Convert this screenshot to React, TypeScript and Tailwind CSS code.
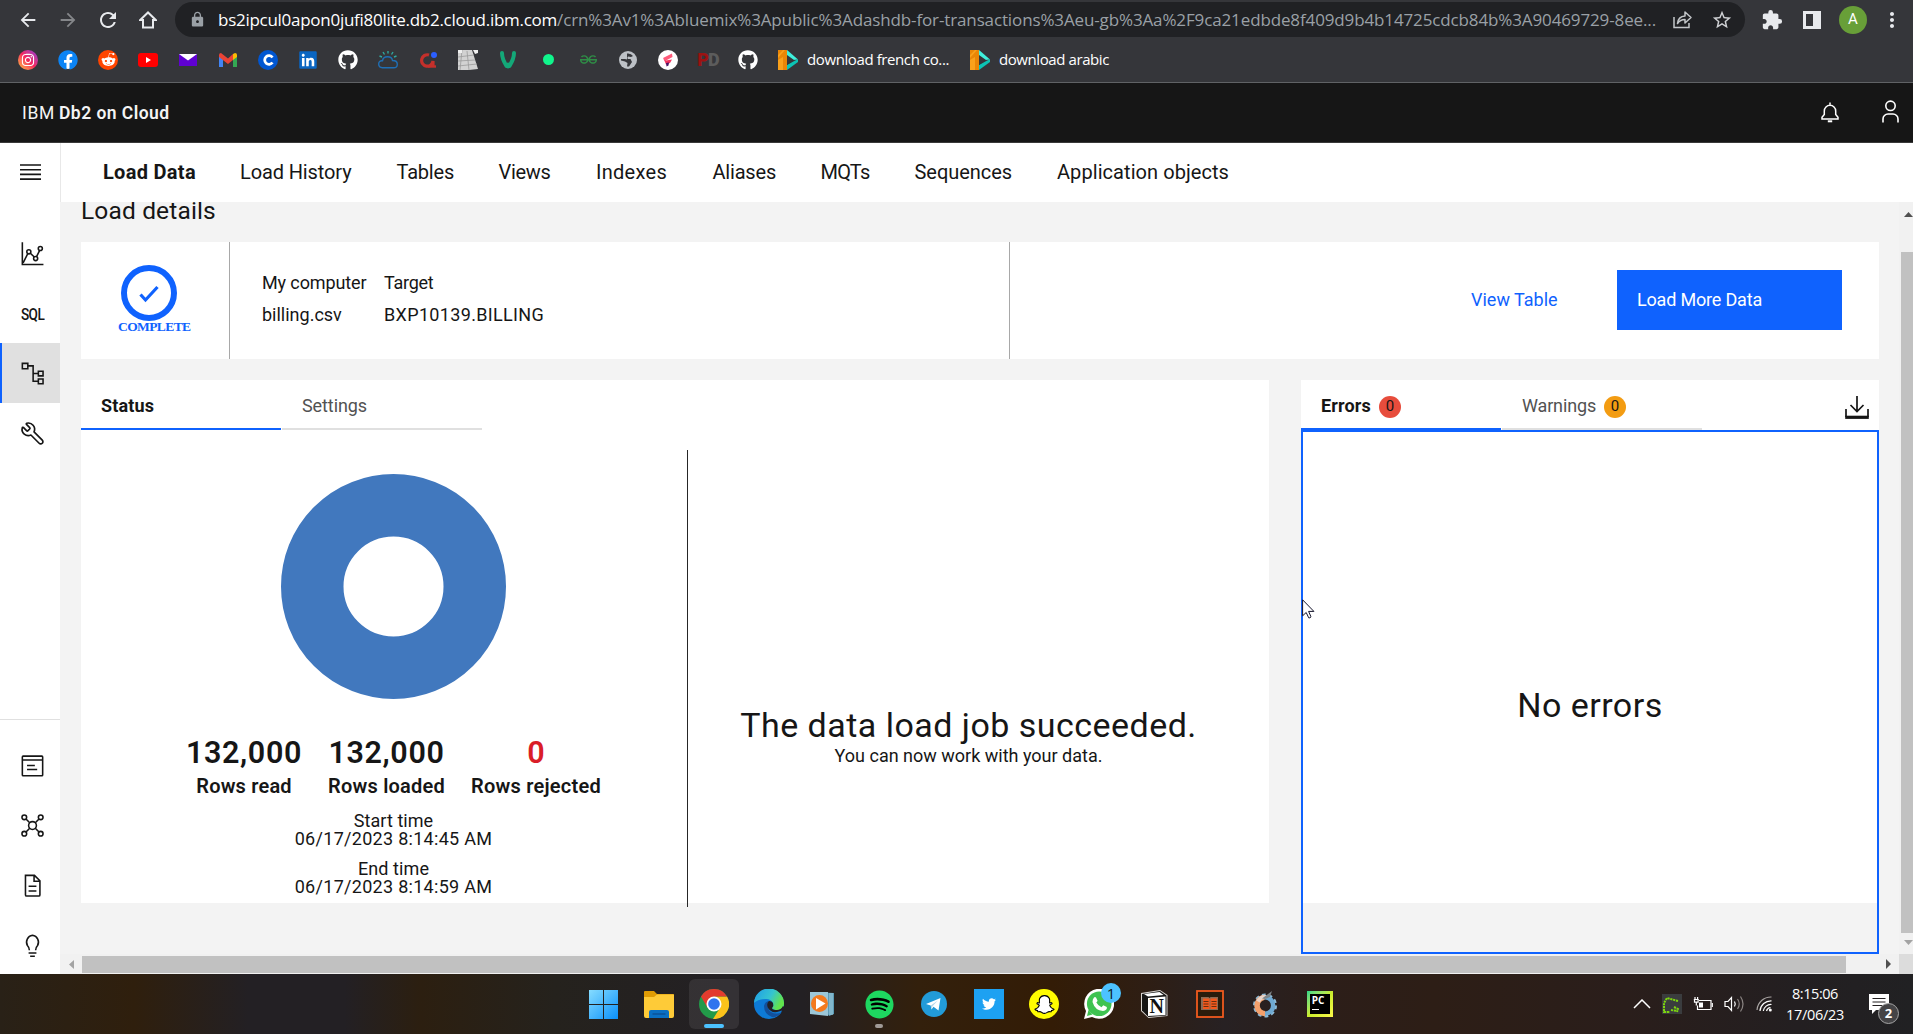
import React from "react";
import {
  FaInstagram,
  FaFacebook,
  FaRedditAlien,
  FaGithub,
  FaLinkedin,
  FaSnapchatGhost,
  FaSpotify,
  FaTwitter,
} from "react-icons/fa";
import {
  MdArrowBack,
  MdArrowForward,
  MdRefresh,
  MdLock,
  MdStarBorder,
  MdExtension,
  MdMoreVert,
} from "react-icons/md";
import { SiGeeksforgeeks } from "react-icons/si";
import { Wrench } from "lucide-react";

/* ---------- Browser chrome ---------- */

function ToolbarCell({ children }: { children: React.ReactNode }) {
  return <div className="flex w-10 shrink-0 items-center justify-center">{children}</div>;
}

function Toolbar() {
  return (
    <div className="flex h-[39px] items-center pl-2 text-[#e8eaed]">
      <ToolbarCell>
        <MdArrowBack size={22} />
      </ToolbarCell>
      <ToolbarCell>
        <MdArrowForward size={22} className="text-[#85878a]" />
      </ToolbarCell>
      <ToolbarCell>
        <MdRefresh size={24} />
      </ToolbarCell>
      <ToolbarCell>
        <svg width="18" height="18" viewBox="0 0 18 18" fill="none" stroke="#e8eaed" strokeWidth="2">
          <path d="M1.200 9L9 1.500 16.800 9H14v7.500H4V9z" />
        </svg>
      </ToolbarCell>
      <div className="ml-[7px] flex h-[35px] w-[1570px] items-center rounded-full bg-[#202124] pl-[14px]">
        <MdLock size={17} className="shrink-0 text-[#9aa0a6]" />
        <div className="ml-[12px] w-[1441px] font-['Open_Sans',sans-serif] text-[17px] leading-6 whitespace-nowrap">
          <span className="tracking-[-0.273px] text-white">bs2ipcul0apon0jufi80lite.db2.cloud.ibm.com</span>
          <span className="tracking-[-0.128px] text-[#9aa0a6]">
            /crn%3Av1%3Abluemix%3Apublic%3Adashdb-for-transactions%3Aeu-gb%3Aa%2F9ca21edbde8f409d9b4b14725cdcb84b%3A90469729-8ee...
          </span>
        </div>
        <svg width="21" height="21" viewBox="0 0 21 21" fill="none" stroke="#c4c7ca" strokeWidth="1.5" className="ml-[13px] shrink-0">
          <path d="M2 8v10.5h15V14" />
          <path d="M5.5 14.5c.4-4.5 3-7.200 7.500-7.500V3l6 5.500-6 5.500v-3.600c-3.400 0-5.600 1.200-7.500 4.100z" strokeLinejoin="round" />
        </svg>
        <MdStarBorder size={22} className="ml-[18px] shrink-0 text-[#d0d2d5]" />
      </div>
      <MdExtension size={22} className="ml-[16px]" />
      <div className="ml-[20px] h-[18px] w-[18px] border-[3px] border-r-[8px] border-[#e8eaed]" />
      <div className="ml-[18px] flex h-7 w-7 items-center justify-center rounded-full bg-[#689f38] font-['Roboto',sans-serif] text-[15px] text-white">
        A
      </div>
      <MdMoreVert size={24} className="ml-[13px]" />
    </div>
  );
}

function PlayBookmark() {
  return (
    <svg width="20" height="20" viewBox="0 0 20 20">
      <path d="M0 0h9v20H0z" fill="#ea8606" />
      <path d="M0 5l5-5h2L0 8zM0 20V10l5-3v13z" fill="#f9a11b" />
      <path d="M9 0l11 9.500-5 .5-6-4z" fill="#3ff0dc" />
      <path d="M20 9v3L9 20v-5z" fill="#0cc4b4" />
      <path d="M9 5l7 5-7 5z" fill="#35363a" />
    </svg>
  );
}

function Bookmarks() {
  return (
    <div className="flex h-[41px] items-center pl-2 text-white">
      <ToolbarCell>
        <div className="flex h-5 w-5 items-center justify-center rounded-full bg-linear-to-tr from-[#fdb82c] via-[#f5205e] to-[#9020d8]">
          <FaInstagram size={14} />
        </div>
      </ToolbarCell>
      <ToolbarCell>
        <div className="flex h-[18px] w-[18px] items-center justify-center rounded-full bg-white">
          <FaFacebook size={20} className="shrink-0 text-[#0b84f5]" />
        </div>
      </ToolbarCell>
      <ToolbarCell>
        <div className="flex h-5 w-5 items-center justify-center rounded-full bg-[#ff4500]">
          <FaRedditAlien size={15} />
        </div>
      </ToolbarCell>
      <ToolbarCell>
        <svg width="20" height="14" viewBox="0 0 20 14">
          <rect width="20" height="14" rx="3" fill="#f00" />
          <path d="M8 4l5 3-5 3z" fill="#fff" />
        </svg>
      </ToolbarCell>
      <ToolbarCell>
        <svg width="18" height="12" viewBox="0 0 18 12">
          <path d="M0 0h18v12H0z" fill="#5f01d1" />
          <path d="M0 0h18L9 6.500z" fill="#fff" />
        </svg>
      </ToolbarCell>
      <ToolbarCell>
        <svg width="18" height="14" viewBox="0 0 18 14">
          <path d="M0 2v12h4V5.500z" fill="#4285f4" />
          <path d="M18 2v12h-4V5.500z" fill="#34a853" />
          <path d="M14 1l2-1q2 0 2 2v2l-4 3z" fill="#fbbc04" />
          <path d="M0 4V2q0-2 2-2l7 5.500L14 1v6l-5 4z" fill="#ea4335" />
        </svg>
      </ToolbarCell>
      <ToolbarCell>
        <div className="flex h-5 w-5 items-center justify-center rounded-full bg-[#0056d2]">
          <svg width="12" height="12" viewBox="0 0 12 12" fill="none" stroke="#fff" strokeWidth="2.800">
            <path d="M10.500 3.500A4.300 4.300 0 1 0 10.500 8.500" />
          </svg>
        </div>
      </ToolbarCell>
      <ToolbarCell>
        <div className="flex h-[16px] w-[16px] items-center justify-center bg-white">
          <FaLinkedin size={20} className="shrink-0 text-[#0a66c2]" />
        </div>
      </ToolbarCell>
      <ToolbarCell>
        <FaGithub size={20} />
      </ToolbarCell>
      <ToolbarCell>
        <svg width="20" height="18" viewBox="0 0 20 18" fill="none" stroke="#1f6fb5" strokeWidth="1.400">
          <path d="M4.500 16.800Q.7 16.500.7 13T4.500 9.800Q5 5.800 9.500 5.800T14.500 9.500Q19.300 9.500 19.300 13.200T15.500 16.800z" />
          <path d="M10 0v2.500M5 1l1.500 2.500M15 1l-1.500 2.500M18.500 5l-2.500 1M1.500 5L4 6" stroke="#2fa8a0" />
        </svg>
      </ToolbarCell>
      <ToolbarCell>
        <svg width="17" height="18" viewBox="0 0 17 18" fill="none">
          <path d="M9 4A5.700 5.700 0 1 0 13 10v5.500" stroke="#c4302b" strokeWidth="3.200" />
          <path d="M8 15.500h8" stroke="#c4302b" strokeWidth="2.400" />
          <circle cx="14" cy="4" r="3" fill="#2b5fff" />
        </svg>
      </ToolbarCell>
      <ToolbarCell>
        <svg width="20" height="20" viewBox="0 0 20 20">
          <path d="M0 3h4V0h10l6 19-9 1H0z" fill="#d2d2d2" />
          <path d="M4 0L2 20M9 1l2 19M0 7l16-2M0 11l17-1M0 16l19-2" stroke="#9a9a9a" strokeWidth="0.800" />
          <path d="M0 0h4v3H0zM15 0h5v3l-3 1z" fill="#efefef" />
        </svg>
      </ToolbarCell>
      <ToolbarCell>
        <svg width="18" height="19" viewBox="0 0 18 19" fill="none" stroke="#14a878" strokeWidth="4" strokeLinecap="round">
          <path d="M3 3c0 5 2 9 4.500 13M15 3c0 5-2 9-4.500 13" />
          <path d="M9 14.500v2" />
        </svg>
      </ToolbarCell>
      <ToolbarCell>
        <div className="h-[11px] w-[11px] rounded-full bg-[#10f58c]" />
      </ToolbarCell>
      <ToolbarCell>
        <SiGeeksforgeeks size={17} className="text-[#2f8d46]" />
      </ToolbarCell>
      <ToolbarCell>
        <svg width="18" height="18" viewBox="0 0 18 18">
          <circle cx="9" cy="9" r="9" fill="#bdc1c6" />
          <path d="M8 2.500q4-.5 6 2.500l-2 1-3-.5q-1.500 1.500 0 2.500h2.500l1.500 3-3 4.500H8l.5-3.500L6 10.500 2 9.500V8h4l2 .5" fill="#35363a" />
        </svg>
      </ToolbarCell>
      <ToolbarCell>
        <svg width="20" height="20" viewBox="0 0 20 20">
          <circle cx="10" cy="10" r="10" fill="#fff" />
          <path d="M5 8l9-4.500.5 3.500L8 10.500z" fill="#ff5a7a" />
          <path d="M5 8l3 2.500 6-1L12 13l-4 1.500L7 12z" fill="#f2355f" />
          <path d="M8 13l3-.5-.5 3-2 1z" fill="#4a1466" />
        </svg>
      </ToolbarCell>
      <ToolbarCell>
        <span className="font-['Roboto',sans-serif] text-[18px] leading-5 font-black tracking-[-1px] text-[#9c1212]">
          P<span className="text-[#5c5c5c]">D</span>
        </span>
      </ToolbarCell>
      <ToolbarCell>
        <FaGithub size={20} />
      </ToolbarCell>
      <div className="ml-[10px] flex items-center font-['Open_Sans',sans-serif] text-[15px] leading-5 whitespace-nowrap">
        <PlayBookmark />
        <span className="mb-[2px] ml-[9px] w-[163px] tracking-[-0.398px]">download french co...</span>
        <PlayBookmark />
        <span className="mb-[2px] ml-[9px] tracking-[-0.414px]">download arabic</span>
      </div>
    </div>
  );
}

/* ---------- Application ---------- */

function AppHeader() {
  return (
    <header className="flex h-[60px] items-center border-b border-[#393939] bg-[#161616] pl-[22px] text-[17.5px] text-[#f4f4f4]">
      <span className="mt-[2px] w-[37px] tracking-[0.68px]">IBM</span>
      <span className="mt-[2px] font-semibold tracking-[0.45px]">Db2 on Cloud</span>
      <svg width="18" height="21" viewBox="0 0 18 21" fill="none" stroke="#fff" strokeWidth="1.500" className="mr-[43px] ml-auto">
        <path d="M9 .5v2M3.300 12.500V9a5.700 5.700 0 0 1 11.400 0v3.500l2.300 2.800v1.700H1v-1.700z" />
        <path d="M6.800 19.300h4.400" strokeWidth="2" />
      </svg>
      <svg width="17" height="23" viewBox="0 0 17 23" fill="none" stroke="#fff" strokeWidth="1.600" className="mr-[14px] mb-[2px]">
        <circle cx="8.500" cy="5.800" r="4.700" />
        <path d="M1 22.500V19a5 5 0 0 1 5-5h5a5 5 0 0 1 5 5v3.500" />
      </svg>
    </header>
  );
}

function CarbonIcon({ children }: { children: React.ReactNode }) {
  return (
    <svg width="25" height="25" viewBox="0 0 32 32" fill="none" stroke="#161616" strokeWidth="2" className="ml-[5px]">
      {children}
    </svg>
  );
}

function SideItem({ active, children }: { active?: boolean; children: React.ReactNode }) {
  return (
    <div
      className={
        active
          ? "flex h-[60px] w-[60px] shrink-0 items-center justify-center bg-[#e0e0e0] shadow-[inset_2px_0_0_#0f62fe]"
          : "flex h-[60px] w-[60px] shrink-0 items-center justify-center"
      }
    >
      {children}
    </div>
  );
}

function Sidebar() {
  return (
    <aside className="flex w-[60px] shrink-0 flex-col overflow-hidden bg-white">
      <div className="flex h-[58px] items-center pl-5">
        <svg width="21" height="16" viewBox="0 0 21 16" stroke="#161616" strokeWidth="1.600">
          <path d="M0 1h21M0 5.700h21M0 10.400h21M0 15.100h21" />
        </svg>
      </div>
      <div className="mt-[22px] flex flex-col">
        <SideItem>
          <CarbonIcon>
            <path d="M3 1.500V30h27M4 28l5.800-11.500M13.300 15.700l5 4.800M21.200 20l4-8" />
            <circle cx="11.300" cy="13.900" r="2.600" />
            <circle cx="20" cy="22.500" r="2.600" />
            <circle cx="26" cy="9.600" r="2.600" />
          </CarbonIcon>
        </SideItem>
        <SideItem>
          <span className="mt-[3px] ml-[5px] origin-center scale-x-80 text-[17px] font-medium tracking-[-0.7px] text-[#161616]">
            SQL
          </span>
        </SideItem>
        <SideItem active>
          <CarbonIcon>
            <path d="M3 3h7v7H3zM23.500 13h6v6h-6zM23.500 23h6v6h-6zM10 6.200h6.800V26h6.700M16.800 16h6.700" />
          </CarbonIcon>
        </SideItem>
        <SideItem>
          <Wrench size={25} strokeWidth={1.600} className="ml-[5px] -scale-x-100 text-[#161616]" />
        </SideItem>
      </div>
      <div className="mt-auto mb-[-1px] flex flex-col border-t border-[#e0e0e0] pt-[15px]">
        <SideItem>
          <CarbonIcon>
            <rect x="3" y="4" width="26" height="25" rx="1" />
            <path d="M3 9h26M9 16h10M9 21h13" />
          </CarbonIcon>
        </SideItem>
        <SideItem>
          <CarbonIcon>
            <circle cx="16" cy="16" r="5" />
            <circle cx="5.500" cy="5.500" r="3" />
            <circle cx="26.500" cy="5.500" r="3" />
            <circle cx="5.500" cy="26.500" r="3" />
            <circle cx="26.500" cy="26.500" r="3" />
            <path d="M7.700 7.700l4.700 4.700M24.300 7.700l-4.700 4.700M7.700 24.300l4.700-4.700M24.300 24.300l-4.700-4.700" />
          </CarbonIcon>
        </SideItem>
        <SideItem>
          <CarbonIcon>
            <path d="M7 3h11.500L25.500 10v18q0 1.500-1.500 1.500H8.500Q7 29.500 7 28zM18 3v7.500h7.500M11 17h10M11 23h10" />
          </CarbonIcon>
        </SideItem>
        <SideItem>
          <CarbonIcon>
            <path d="M12 22q0-3.500-2.500-6A8.800 8.800 0 0 1 16 3a8.800 8.800 0 0 1 6.500 13Q20 18.500 20 22M11 25.500h10M13 29.800h6" />
          </CarbonIcon>
        </SideItem>
      </div>
    </aside>
  );
}

function TopNav() {
  return (
    <nav className="relative z-10 flex h-[59px] shrink-0 items-center border-l border-[#e8e8e8] bg-white pb-[2px] pl-[42px] text-[20px] whitespace-nowrap text-[#161616]">
      <span className="w-[137px] font-bold tracking-[0.3px]">Load Data</span>
      <span className="w-[156.500px] tracking-[-0.12px]">Load History</span>
      <span className="w-[102px] tracking-[-0.2px]">Tables</span>
      <span className="w-[97.500px] tracking-[-0.3px]">Views</span>
      <span className="w-[116.500px] tracking-[0.28px]">Indexes</span>
      <span className="w-[108px] tracking-[-0.2px]">Aliases</span>
      <span className="w-[94px] tracking-[-0.73px]">MQTs</span>
      <span className="w-[142.500px] tracking-[-0.05px]">Sequences</span>
      <span className="tracking-[0.065px]">Application objects</span>
    </nav>
  );
}

function SummaryCard() {
  return (
    <section className="flex h-[117px] shrink-0 bg-white text-[18px]">
      <div className="flex w-[149px] flex-col border-r border-[#a8a8a8] pt-[23px] pl-[37px]">
        <svg width="56" height="56" viewBox="0 0 56 56" fill="none" stroke="#0f62fe" className="ml-[3px]">
          <circle cx="28" cy="28" r="25" strokeWidth="6" />
          <path d="M19.500 29.500l5 5.500L36.500 22" strokeWidth="3.200" />
        </svg>
        <span className="font-['Liberation_Serif',serif] text-[13.500px] leading-[12px] font-bold tracking-[-0.6px] text-[#0f62fe]">
          COMPLETE
        </span>
      </div>
      <div className="grid w-[780px] grid-cols-[122px_1fr] content-start border-r border-[#a8a8a8] pt-[25px] pl-8 leading-8 text-[#161616]">
        <span className="tracking-[-0.11px]">My computer</span>
        <span className="tracking-[-0.25px]">Target</span>
        <span>billing.csv</span>
        <span className="tracking-[0.34px]">BXP10139.BILLING</span>
      </div>
      <div className="flex flex-1 items-center justify-end pr-[37px] pb-[2px]">
        <a className="w-[146px] text-[#0f62fe]">View Table</a>
        <button className="h-[60px] w-[225px] bg-[#0f62fe] pl-5 text-left tracking-[-0.18px] text-white">
          Load More Data
        </button>
      </div>
    </section>
  );
}

function StatusCard() {
  return (
    <section className="flex h-[523px] w-[1188px] flex-col bg-white">
      <div className="flex h-[50px] shrink-0 gap-px text-[18px]">
        <div className="flex w-[200px] items-center border-b-2 border-[#0f62fe] pt-[3px] pl-5 font-bold tracking-[0.13px] text-[#161616]">
          Status
        </div>
        <div className="flex w-[200px] items-center border-b-2 border-[#e0e0e0] pt-[3px] pl-5 tracking-[-0.09px] text-[#525252]">
          Settings
        </div>
      </div>
      <div className="flex items-start">
        <div className="flex w-[606px] shrink-0 flex-col items-center pt-[44px] pl-[19px] text-[#161616]">
          <svg width="225" height="225" viewBox="0 0 225 225">
            <circle cx="112.500" cy="112.500" r="81.250" fill="none" stroke="#4178be" strokeWidth="62.500" />
          </svg>
          <div className="mt-[36px] flex gap-[26px] text-center text-[20px] leading-[30px] font-semibold">
            <div className="flex w-[116px] flex-col whitespace-nowrap">
              <span className="text-[30.500px] leading-9 tracking-[0.6px]">132,000</span>
              <span className="tracking-[0.19px]">Rows read</span>
            </div>
            <div className="flex w-[117px] flex-col whitespace-nowrap">
              <span className="text-[30.500px] leading-9 tracking-[0.6px]">132,000</span>
              <span className="tracking-[0.22px]">Rows loaded</span>
            </div>
            <div className="flex w-[130px] flex-col whitespace-nowrap">
              <span className="text-[30.500px] leading-9 text-[#da1e28]">0</span>
              <span className="tracking-[0.24px]">Rows rejected</span>
            </div>
          </div>
          <div className="mt-[11px] flex flex-col items-center text-[18px] leading-[18px]">
            <span className="tracking-[0.06px]">Start time</span>
            <span className="tracking-[0.29px]">06/17/2023 8:14:45 AM</span>
            <span className="mt-3 tracking-[0.08px]">End time</span>
            <span className="tracking-[0.29px]">06/17/2023 8:14:59 AM</span>
          </div>
        </div>
        <div className="mt-5 h-[457px] w-px shrink-0 bg-[#262626]" />
        <div className="flex flex-1 flex-col items-center pt-[274px] pr-[20px] text-[#161616]">
          <span className="text-[34px] leading-[42px] tracking-[0.47px]">The data load job succeeded.</span>
          <span className="text-[18px] leading-[20px]">You can now work with your data.</span>
        </div>
      </div>
    </section>
  );
}

function Pointer() {
  return (
    <svg width="13" height="20" viewBox="0 0 13 20" className="absolute top-[167px] -left-px">
      <path
        d="M.6.800v16L4.200 13.500l2.500 5.300q1.300.6 2.300-1L6.600 12.400h5.300z"
        fill="#fff"
        stroke="#14142a"
        strokeWidth="1"
      />
    </svg>
  );
}

function ErrorsCard() {
  return (
    <section className="flex h-[574px] w-[578px] flex-col">
      <div className="flex h-[50px] shrink-0 gap-px bg-white text-[18px]">
        <div className="flex w-[200px] items-center border-b-2 border-[#0f62fe] pt-[3px] pl-5 font-bold tracking-[0.16px] text-[#161616]">
          <span className="w-[58px]">Errors</span>
          <span className="mt-[2px] flex h-[22px] w-[22px] items-center justify-center rounded-full bg-[#e74c3c] text-[15px] font-normal">
            0
          </span>
        </div>
        <div className="flex w-[200px] items-center border-b-2 border-[#e0e0e0] pt-[3px] pl-5 tracking-[-0.15px] text-[#525252]">
          <span className="w-[82px]">Warnings</span>
          <span className="mt-[2px] flex h-[22px] w-[22px] items-center justify-center rounded-full bg-[#f39c12] text-[15px] text-[#161616]">
            0
          </span>
        </div>
        <svg width="24" height="24" viewBox="0 0 24 24" fill="none" stroke="#161616" className="mt-4 mr-[10px] ml-auto">
          <path d="M12 0v15M5.500 9l6.500 6.500L18.500 9M1 13v8M23 13v8" strokeWidth="1.700" />
          <path d="M.2 21.300h23.600" strokeWidth="3.200" />
        </svg>
      </div>
      <div className="relative flex-1 border-2 border-[#0f62fe]">
        <div className="h-[471px] bg-white pt-[252px] text-center text-[34px] leading-[42px] tracking-[0.45px] text-[#161616]">
          No errors
        </div>
        <Pointer />
      </div>
    </section>
  );
}

function Arrow({ d, color, w, h }: { d: string; color: string; w: number; h: number }) {
  return (
    <svg width={w} height={h} viewBox={`0 0 ${w} ${h}`} fill={color} className="shrink-0">
      <path d={d} />
    </svg>
  );
}

function Workspace() {
  return (
    <main className="flex min-w-0 flex-1 flex-col">
      <TopNav />
      <div className="flex h-[752px]">
        <div className="flex w-[1839px] flex-col bg-[#f3f3f3] pr-5 pl-[21px]">
          <h1 className="-mt-[6px] h-[46px] shrink-0 text-[24.500px] leading-[30px] tracking-[0.15px] text-[#161616]">
            Load details
          </h1>
          <SummaryCard />
          <div className="mt-[21px] flex justify-between">
            <StatusCard />
            <ErrorsCard />
          </div>
        </div>
        <div className="flex flex-1 flex-col items-end bg-[#f1f1f1]">
          <div className="flex h-[50px] items-start pt-[10px]">
            <Arrow w={9} h={5} d="M4.500 0L9 5H0z" color="#505050" />
          </div>
          <div className="h-[681px] w-3 bg-[#c1c1c1]" />
          <div className="pt-[7px]">
            <Arrow w={9} h={5} d="M0 0h9L4.500 5z" color="#a3a3a3" />
          </div>
        </div>
      </div>
      <div className="flex h-5 items-center bg-[#f1f1f1]">
        <div className="w-[22px] pl-[9px]">
          <Arrow w={5} h={9} d="M5 0v9L0 4.500z" color="#a3a3a3" />
        </div>
        <div className="mt-px h-[17px] w-[1764px] bg-[#c1c1c1]" />
        <div className="flex-1 pl-[40px]">
          <Arrow w={5} h={10} d="M0 0v10l5-5z" color="#505050" />
        </div>
        <div className="h-5 w-[14px] bg-[#dcdcdc]" />
      </div>
    </main>
  );
}

/* ---------- Taskbar ---------- */

function Task({ children, indicator }: { children: React.ReactNode; indicator?: React.ReactNode }) {
  return (
    <div className="relative flex h-[60px] w-[55.100px] shrink-0 items-center justify-center">
      {children}
      {indicator}
    </div>
  );
}

function Taskbar() {
  return (
    <footer className="flex h-[60px] w-full shrink-0 items-center bg-[linear-gradient(90deg,#292117_0%,#2f1f0d_7%,#232024_13%,#232024_18%,#2c1f10_22%,#25221d_29%,#232024_38%,#232023_42%,#33200c_48%,#331c06_55%,#2e1e14_60%,#272123_64%,#2c1e19_69%,#2d1e16_75%,#2a1e1b_85%,#231f21_94%,#212123_100%)] pl-[576px]">
      <Task>
        <svg width="29" height="29" viewBox="0 0 29 29">
          <defs>
            <linearGradient id="win" x1="0" y1="0" x2="1" y2="1">
              <stop offset="0" stopColor="#86dcff" />
              <stop offset="1" stopColor="#0a90fa" />
            </linearGradient>
          </defs>
          <path d="M0 0h14v14H0zM15 0h14v14H15zM0 15h14v14H0zM15 15h14v14H15z" fill="url(#win)" />
        </svg>
      </Task>
      <Task>
        <svg width="30" height="27" viewBox="0 0 30 27">
          <path d="M0 1q0-1 1-1h9l3 3h16q1 0 1 1v8H0z" fill="#e09c04" />
          <path d="M0 6h10l3-2.500h17V25q0 2-2 2H2q-2 0-2-2z" fill="#fecb38" />
          <path d="M5 27v-6q0-2 2-2h16q2 0 2 2v6z" fill="#0a6fc2" />
          <path d="M8.500 23h13" stroke="#0a4c8c" strokeWidth="1.200" />
        </svg>
      </Task>
      <Task indicator={<div className="absolute bottom-[6px] h-1 w-5 rounded-full bg-[#4cc2ff]" />}>
        <div className="flex h-[50px] w-[50px] shrink-0 items-center justify-center rounded-md bg-white/8">
          <svg width="30" height="30" viewBox="0 0 30 30">
            <circle cx="15" cy="15" r="15" fill="#229a49" />
            <path d="M28 7.500A15 15 0 0 1 14 30l7.500-12L15 7.500z" fill="#fcc21b" />
            <path d="M2 7.500A15 15 0 0 1 28 7.500H15L8.500 18.700z" fill="#e33b2e" />
            <circle cx="15" cy="15" r="7.500" fill="#fff" />
            <circle cx="15" cy="15" r="5.800" fill="#2f74ee" />
          </svg>
        </div>
      </Task>
      <Task>
        <svg width="30" height="30" viewBox="0 0 30 30">
          <defs>
            <linearGradient id="edge" x1="0" y1="0" x2="1" y2=".4">
              <stop offset="0" stopColor="#1e9be8" />
              <stop offset=".6" stopColor="#35c4d0" />
              <stop offset="1" stopColor="#62e44c" />
            </linearGradient>
          </defs>
          <circle cx="15" cy="15" r="15" fill="#0d7ad6" />
          <path d="M0 14A15 15 0 0 1 30 15q0 5-6 6-5 0-6-2 2-2 1-5-2-4-7-4-8 0-12 4z" fill="url(#edge)" />
          <path d="M10 17q0 8 8 11 5 1 10-5-6 3-11 0-3-2-3-6 0-3 2-5-5 0-6 5z" fill="#12509c" />
          <path d="M15 12q-3 3-1 7 3 5 9 4l5-1.500L27 24q3-1 3-6l-1-1q-2 4-6 4-5 0-5-2 2-2 1-5-1-2-4-2z" fill="#232023" />
        </svg>
      </Task>
      <Task>
        <svg width="26" height="26" viewBox="0 0 26 26" className="mr-1">
          <path d="M5 1l20 1v21l-5 2z" fill="#5c9bb5" />
          <path d="M23 2v22M21 2v22" stroke="#a6d3e4" strokeWidth="1" />
          <path d="M1 1h18v24L1 23z" fill="#9cc7d8" />
          <circle cx="10.500" cy="12.500" r="8.500" fill="#f37a1f" />
          <path d="M7 7l9.500 5.500L7 18.500z" fill="#fff" />
        </svg>
      </Task>
      <Task indicator={<div className="absolute bottom-[6px] h-1 w-2 rounded-full bg-[#a09a96]" />}>
        <div className="flex h-[26px] w-[26px] items-center justify-center rounded-full bg-black">
          <FaSpotify size={29} className="shrink-0 text-[#1ed760]" />
        </div>
      </Task>
      <Task>
        <svg width="26" height="26" viewBox="0 0 26 26">
          <circle cx="13" cy="13" r="13" fill="#229bd8" />
          <path d="M5 13L19.500 7 17.500 19.500l-5-3.700-2 2.700-.8-4z" fill="#fff" />
          <path d="M9.800 14.500l7-5-5.500 6-.8 3z" fill="#b5d8ea" />
        </svg>
      </Task>
      <Task>
        <div className="flex h-[30px] w-[30px] items-center justify-center bg-[#1da1f2]">
          <FaTwitter size={14} className="text-white" />
        </div>
      </Task>
      <Task>
        <div className="flex h-[30px] w-[30px] items-center justify-center rounded-full bg-[#fffc00]">
          <FaSnapchatGhost size={19} className="overflow-visible text-white [&_path]:stroke-black [&_path]:stroke-[30px]" />
        </div>
      </Task>
      <Task
        indicator={
          <div className="absolute top-[9px] right-[6px] flex h-5 w-5 items-center justify-center rounded-full bg-[#4cc2ff] font-['Open_Sans',sans-serif] text-[15px] text-[#101820]">
            1
          </div>
        }
      >
        <svg width="30" height="30" viewBox="0 0 30 30">
          <path d="M0 30l2-8A15 15 0 1 1 8 28z" fill="#fff" />
          <circle cx="15.200" cy="14.800" r="12.300" fill="#3fc351" />
          <path d="M3 27l1.500-6 4 4.500z" fill="#3fc351" />
          <path
            d="M10 8.500q1-1 2 0l1.500 3q0 1-1.200 2 2 3.500 5.200 4.800l1.800-2 3.500 1.700q.8 3-3.800 4Q11 21.500 8.500 13q0-3 1.500-4.500z"
            fill="#fff"
          />
        </svg>
      </Task>
      <Task>
        <svg width="27" height="28" viewBox="0 0 27 28">
          <path d="M0 3L19 0l7.500 5v21l-19 2L0 21z" fill="#d8d4d0" />
          <path d="M1 4l18-3 6.500 4.500v20L7.500 27 1 20.500z" fill="#171615" />
          <path d="M3 4l15.500-2 4 3L7 6.500z" fill="#fff" />
          <path d="M7 8l17.500-1.500V25L7 26z" fill="#fff" />
          <text x="8.500" y="23" fontFamily="Liberation Serif, serif" fontWeight="700" fontSize="20" fill="#111">
            N
          </text>
        </svg>
      </Task>
      <Task>
        <svg width="28" height="28" viewBox="0 0 28 28">
          <rect x="1" y="1" width="26" height="26" fill="#2a1c0c" stroke="#f05a1e" strokeWidth="1.800" />
          <path d="M5 7h7.500l1 1 1-1H22v13H5z" fill="#8a6a55" />
          <path d="M7 8.500h6.500V19H7zM14.500 8.500H21V19h-6.500z" fill="#f4581c" />
          <path d="M7.500 11.500h5M7.500 14h5M7.500 16.500h5M15.500 11.500h5M15.500 14h5M15.500 16.500h5" stroke="#2a1c0c" strokeWidth=".7" />
        </svg>
      </Task>
      <Task>
        <svg width="26" height="28" viewBox="0 0 26 28" fill="none">
          <circle cx="13" cy="15.500" r="10.500" stroke="#8dbbd8" strokeWidth="3" strokeDasharray="3.600 3" />
          <circle cx="13" cy="15.500" r="8.200" stroke="#6fa9d2" strokeWidth="4.500" />
          <path d="M13 23.700A8.200 8.200 0 0 1 12 7.400" stroke="#f3a06c" strokeWidth="5.500" />
          <path d="M6 11.500A8.200 8.200 0 0 1 14 7" stroke="#e8d3c8" strokeWidth="4" />
          <path d="M10 8.500L20 1l-2 6-5 2z" fill="#7d8488" />
        </svg>
      </Task>
      <Task>
        <div className="flex h-[26px] w-[26px] items-center justify-center bg-linear-to-br from-[#21d789] via-[#c8ec2c] to-[#fcf84a]">
          <div className="flex h-5 w-5 flex-col bg-black pl-[2px] font-['Open_Sans',sans-serif] text-[10px] leading-[12px] font-bold text-white">
            PC
            <div className="mt-[3px] h-px w-[7px] bg-white" />
          </div>
        </div>
      </Task>

      <div className="ml-auto flex h-full items-center">
        <div className="flex w-[150px] items-center justify-around">
          <svg width="18" height="10" viewBox="0 0 18 10" fill="none" stroke="#fff" strokeWidth="1.500">
            <path d="M1 9l8-8 8 8" />
          </svg>
          <div className="h-5 w-5 bg-[#3a3c3e]">
            <svg width="20" height="20" viewBox="0 0 20 20" fill="none" stroke="#7ed60f" strokeWidth="2" strokeDasharray="2.200 .7">
              <path d="M16 7L5 4 2 9v9h6M9 16l6 1M12 13l4 2-1 3" />
            </svg>
          </div>
          <svg width="20" height="16" viewBox="0 0 20 16" fill="none" stroke="#fff" strokeWidth="1.200">
            <path d="M6 4.500h12v9H4.500v-4" />
            <path d="M6 6.500h4v5H6z" fill="#fff" stroke="none" />
            <path d="M19.300 7v4M.8 3.500h5M2 1v2.500M4.600 1v2.500M1.500 4v2.200h3.600V4M3.300 6.500v3" />
          </svg>
          <svg width="21" height="18" viewBox="0 0 21 18" fill="none" stroke="#fff" strokeWidth="1.200">
            <path d="M1 6.500h3L7.500 2.500v13L4 11.500H1z" />
            <path d="M10.500 6.500q1.500 2.500 0 5" />
            <path d="M13.500 4q3.500 5 0 10M16.500 1.500q5 7.500 0 15" stroke="#8b8583" />
          </svg>
          <svg width="17" height="16" viewBox="0 0 17 16" fill="none" stroke="#fff" strokeWidth="1.200">
            <path d="M1 14A14 14 0 0 1 15.500 1" stroke="#a9a5a3" />
            <path d="M4 15A11 11 0 0 1 15.500 4.800M7.300 15A7.600 7.600 0 0 1 15.500 8.500M10.500 15a4.500 4.500 0 0 1 4-3.500" />
            <circle cx="14.300" cy="14" r="1.500" fill="#fff" stroke="none" />
          </svg>
        </div>
        <div className="flex w-[76px] flex-col items-center pr-[2px] font-['Open_Sans',sans-serif] text-[14.500px] leading-[21px] text-white">
          <span className="tracking-[-0.45px]">8:15:06</span>
          <span className="tracking-[-0.3px]">17/06/23</span>
        </div>
        <div className="relative flex h-full w-[59px] items-center pl-[15px]">
          <svg width="20" height="20" viewBox="0 0 20 20" className="mb-px">
            <path d="M0 0h20v16H7l-4 4v-4H0z" fill="#fff" />
            <path d="M3.500 4.500h13M3.500 8h13M3.500 11.500h13" stroke="#231f21" strokeWidth="1.200" />
          </svg>
          <div className="absolute top-[29px] left-[24px] flex h-[21px] w-[21px] items-center justify-center rounded-full border border-[#a5a5a5] bg-[#454446] font-['Open_Sans',sans-serif] text-[13px] font-bold text-white">
            2
          </div>
        </div>
      </div>
    </footer>
  );
}

export default function App() {
  return (
    <div className="flex h-[1034px] w-[1913px] flex-col overflow-hidden bg-white font-['Roboto',sans-serif]">
      <div className="h-[83px] shrink-0 border-b border-[#606265] bg-[#35363a]">
        <Toolbar />
        <Bookmarks />
      </div>
      <AppHeader />
      <div className="flex h-[831px]">
        <Sidebar />
        <Workspace />
      </div>
      <Taskbar />
    </div>
  );
}
